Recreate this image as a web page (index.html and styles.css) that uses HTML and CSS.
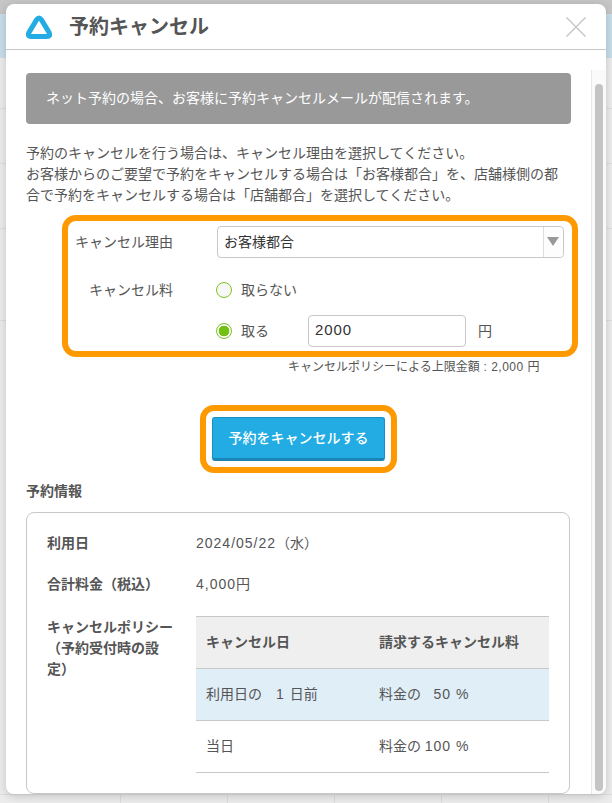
FILE: index.html
```html
<!DOCTYPE html>
<html lang="ja">
<head>
  <meta charset="UTF-8" />
  <title>予約キャンセル</title>
  <link rel="stylesheet" href="styles.css">
</head>
<body>
  <div class="backdrop">
    <div class="bd-top"></div>
    <div class="bd-blue"></div>
    <div class="bd-row r1"></div>
    <div class="bd-row r2"></div>
    <div class="bd-row r3"></div>
    <div class="bd-row r4"></div>
    <div class="bd-row r5"></div>
    <div class="bd-foot"></div>
  </div>

  <div class="modal">
    <header class="modal-head">
      <svg class="logo" width="26" height="24" viewBox="0 0 26 24">
        <path d="M10.8 4.4 Q13 1.4 15.2 4.4 L23 17.4 Q25 21.5 20.8 21.5 L5.2 21.5 Q1 21.5 3 17.4 Z" fill="none" stroke="#22ace3" stroke-width="5" stroke-linejoin="round"/>
      </svg>
      <h1>予約キャンセル</h1>
      <svg class="close" width="20" height="20" viewBox="0 0 20 20">
        <path d="M0.5 0.5 L19.5 19.5 M19.5 0.5 L0.5 19.5" stroke="#c8c8c8" stroke-width="1.5" fill="none"/>
      </svg>
    </header>
    <div class="modal-body">
      <div class="content">
        <p class="alert">ネット予約の場合、お客様に予約キャンセルメールが配信されます。</p>
        <p class="lead">予約のキャンセルを行う場合は、キャンセル理由を選択してください。<br>お客様からのご要望で予約をキャンセルする場合は「お客様都合」を、店舗様側の都合で予約をキャンセルする場合は「店舗都合」を選択してください。</p>

        <div class="highlight form-box">
          <div class="form-row reason-row">
            <span class="form-label reason-label">キャンセル理由</span>
            <div class="select">
              <span class="select-value">お客様都合</span>
              <span class="select-arrow"></span>
            </div>
          </div>
          <div class="form-row fee-row">
            <span class="form-label fee-label">キャンセル料</span>
            <span class="radio"></span>
            <span class="radio-text">取らない</span>
          </div>
          <div class="form-row charge-row">
            <span class="radio checked"></span>
            <span class="radio-text charge-text">取る</span>
            <div class="amount">2000</div>
            <span class="yen">円</span>
          </div>
        </div>
        <p class="limit">キャンセルポリシーによる上限金額<span class="num small"> : 2,000 </span>円</p>

        <div class="action">
          <div class="highlight button-box">
            <button class="submit">予約をキャンセルする</button>
          </div>
        </div>

        <h2>予約情報</h2>
        <div class="info">
          <div class="info-row date-row">
            <div class="info-label">利用日</div>
            <div><span class="num">2024/05/22</span>（水）</div>
          </div>
          <div class="info-row total-row">
            <div class="info-label">合計料金（税込）</div>
            <div><span class="num">4,000</span>円</div>
          </div>
          <div class="info-row policy-row">
            <div class="info-label policy-label">キャンセルポリシー（予約受付時の設定）</div>
            <table class="policy">
              <tr><th class="col-day">キャンセル日</th><th>請求するキャンセル料</th></tr>
              <tr class="current"><td>利用日の　<span class="num">1 </span>日前</td><td class="fee">料金の<span class="num pct">50</span><span class="num"> %</span></td></tr>
              <tr><td>当日</td><td class="fee">料金の<span class="num pct">100</span><span class="num"> %</span></td></tr>
            </table>
          </div>
        </div>
      </div>
      <div class="scrollbar"><div class="thumb"></div></div>
    </div>
  </div>
</body>
</html>
```

FILE: styles.css
```css
* {
  box-sizing: border-box;
  margin: 0;
  padding: 0;
}

html, body {
  height: 100%;
  overflow: hidden;
}

body {
  background: #ececec;
  font-family: "Noto Sans CJK JP", "Liberation Sans", sans-serif;
  font-size: 14px;
  color: #555;
}

/* dimmed page behind the dialog */
.backdrop {
  height: 100%;
  display: flex;
  flex-direction: column;
}

.bd-top {
  height: 14px;
  background: #c6c6c6;
}

.bd-blue {
  height: 44px;
  background: #c7dfea;
}

.bd-row {
  border-bottom: 1px solid #dedede;
}

.r1 { height: 51px; }
.r2 { height: 55px; }
.r3 { height: 65px; }
.r4 { height: 92px; }
.r5 { height: 474px; }

.bd-foot {
  flex: 1;
  background: repeating-linear-gradient(to right, #ececec 0 106px, #dcdcdc 106px 107px) 14px 0;
}

.modal {
  position: absolute;
  left: 6px;
  top: 4px;
  width: 600px;
  height: 790px;
  background: #fff;
  border-radius: 8px;
  box-shadow: 0 2px 10px rgba(0,0,0,0.18);
  overflow: hidden;
  display: flex;
  flex-direction: column;
}

.modal-head {
  height: 46px;
  flex-shrink: 0;
  display: flex;
  align-items: center;
  padding: 0 20px;
  border-bottom: 1px solid #c8c8c8;
}

.logo, .close {
  flex-shrink: 0;
}

.modal-head h1 {
  flex: 1;
  margin-left: 17px;
  padding-bottom: 2px;
  font-size: 20px;
  font-weight: 700;
  color: #555;
}

.modal-body {
  flex: 1;
  display: flex;
  min-height: 0;
}

.content {
  flex: 1;
  padding: 23px 20px 0;
  min-width: 0;
}

.scrollbar {
  width: 15px;
  flex-shrink: 0;
  margin-top: 20px;
  border-left: 1px solid #e8e8e8;
  background: #fafafa;
  padding: 14px 3px 3px 3px;
}

.thumb {
  height: 100%;
  background: #c4c4c4;
  border-radius: 4px;
}

.num {
  font-family: "Liberation Sans", sans-serif;
  letter-spacing: 1px;
}

.num.small {
  letter-spacing: 0.5px;
}

.alert {
  height: 51px;
  line-height: 49px;
  padding-left: 20px;
  background: #999;
  border-radius: 4px;
  color: #fff;
}

.lead {
  margin-top: 18px;
  line-height: 21px;
}

.highlight {
  border: 6px solid #ff9900;
  border-radius: 14px;
  background: #fff;
}

.form-box {
  margin: 10px 0 0 36px;
  width: 516px;
  height: 142px;
  padding: 5px 8px 0 7px;
}

.form-row {
  display: flex;
  align-items: center;
}

.reason-row {
  height: 32px;
}

.form-label {
  flex-shrink: 0;
  padding-bottom: 3px;
}

.reason-label {
  width: 142px;
}

.select {
  flex: 1;
  height: 32px;
  border: 1px solid #c8c8c8;
  border-radius: 4px;
  display: flex;
  align-items: center;
  color: #333;
}

.select-value {
  flex: 1;
  padding: 0 0 3px 6px;
}

.select-arrow {
  width: 20px;
  height: 30px;
  border-left: 1px solid #ddd;
  border-radius: 0 4px 4px 0;
  background: #fdfdfd;
  position: relative;
}

.select-arrow::after {
  content: "";
  position: absolute;
  left: 3px;
  top: 10px;
  border-left: 6.5px solid transparent;
  border-right: 6.5px solid transparent;
  border-top: 9px solid #999;
}

.fee-row {
  margin-top: 19px;
  height: 26px;
}

.fee-label {
  width: 141px;
  padding-left: 14px;
}

.radio {
  width: 16px;
  height: 16px;
  flex-shrink: 0;
  border: 1px solid #7ec320;
  border-radius: 50%;
  background: #f7f7f7;
}

.radio.checked {
  background: radial-gradient(circle, #72c010 0 5px, #f7f7f7 5.6px);
}

.radio-text {
  margin-left: 9px;
  padding-bottom: 2px;
}

.charge-row {
  margin-top: 12px;
  height: 32px;
  padding-left: 141px;
}

.charge-text {
  width: 67px;
  flex-shrink: 0;
}

.amount {
  width: 158px;
  height: 32px;
  line-height: 28px;
  border: 1px solid #c8c8c8;
  border-radius: 4px;
  padding-left: 6px;
  font-size: 15px;
  letter-spacing: 0.9px;
  color: #333;
  font-family: "Liberation Sans", sans-serif;
}

.yen {
  margin-left: 12px;
  padding-bottom: 2px;
}

.limit {
  height: 18px;
  padding-left: 262px;
  font-size: 12px;
  line-height: 18px;
}

.action {
  display: flex;
  justify-content: center;
  margin-top: 30px;
}

.button-box {
  padding: 6px;
  width: 197px;
  height: 68px;
}

.submit {
  display: block;
  width: 100%;
  height: 44px;
  padding-bottom: 3px;
  background: #22ace3;
  border: 1px solid #1b8fc0;
  border-bottom: 3px solid #1b86b5;
  border-radius: 3px;
  color: #fff;
  font: 500 14px "Noto Sans CJK JP", sans-serif;
}

h2 {
  margin-top: 8px;
  font-size: 14px;
  font-weight: 700;
  line-height: 18px;
}

.info {
  margin: 13px 1px 0 0;
  border: 1px solid #c8c8c8;
  border-radius: 8px;
  padding: 19px 20px 20px;
}

.info-row {
  display: flex;
  line-height: 21px;
}

.date-row, .total-row {
  height: 21px;
}

.info-label {
  width: 149px;
  flex-shrink: 0;
  font-weight: 700;
}

.total-row {
  margin-top: 20px;
}

.policy-row {
  margin-top: 22px;
}

.policy-label {
  padding-right: 19px;
}

.policy {
  width: 353px;
  border-collapse: collapse;
  border-bottom: 1px solid #c8c8c8;
  table-layout: fixed;
}

.policy th, .policy td {
  height: 52px;
  padding: 0 0 2px 10px;
  text-align: left;
  border-top: 1px solid #c8c8c8;
  font-size: 14px;
}

.col-day {
  width: 173px;
}

.policy th {
  background: #efefef;
  font-weight: 700;
}

.policy tr.current td {
  background: #e0eef7;
}

.pct {
  display: inline-block;
  width: 30px;
  text-align: right;
}
```
